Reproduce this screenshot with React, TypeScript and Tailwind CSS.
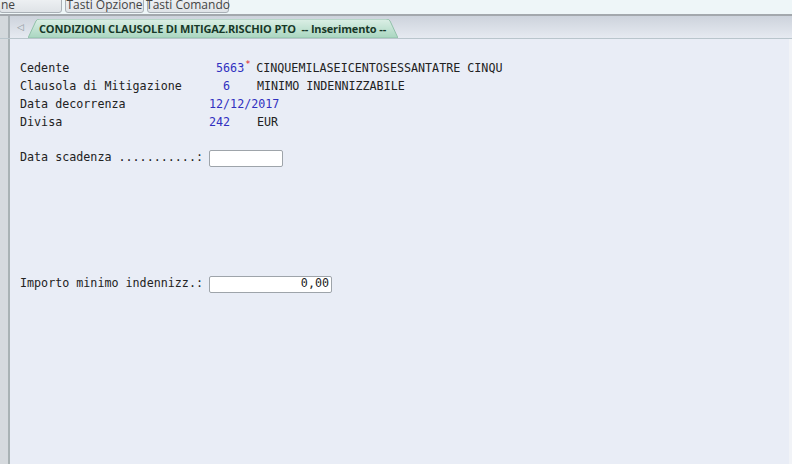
import React from "react";

const mono = "font-['DejaVu_Sans_Mono','Liberation_Mono',monospace] text-[11.7px]";

function Row({ label, children }: { label: string; children?: React.ReactNode }) {
  return (
    <div className="flex h-[18px] items-center">
      <div className="w-[189px] whitespace-pre text-[#222]">{label}</div>
      {children}
    </div>
  );
}

const btn =
  "h-[20px] mb-[1px] border border-[#a9b0b6] rounded-[3px] bg-gradient-to-b from-[#f4f6f8] to-[#dfe3e7] flex items-end justify-center leading-[14px] whitespace-nowrap shrink-0";

export default function App() {
  return (
    <div className="w-[792px] h-[464px] overflow-hidden flex flex-col bg-[#e9edf6]">
      {/* toolbar strip, cut at the top */}
      <div className="h-[14px] bg-[#eef6f8] flex items-end gap-[3px] overflow-hidden font-['Open_Sans',sans-serif] text-[12px] text-[#444]">
        <div className={`${btn} w-[63px] -ml-[1px] !justify-start pl-[1px]`}>ne</div>
        <div className={`${btn} w-[79px]`}>Tasti Opzione</div>
        <div className={`${btn} w-[82px]`}>Tasti Comando</div>
      </div>

      {/* tab bar */}
      <div className="h-[25px] flex border-t-2 border-[#a3a8ad] bg-gradient-to-b from-[#cdd3dc] to-[#e6eaf1] border-b border-b-[#b9c5cc]">
        <div className="w-[12px] flex">
          <div className="w-[8px] bg-[#d3d8dc]" />
          <div className="w-[2px] bg-[#aab2b6]" />
        </div>
        <div className="w-[16px] flex items-center justify-center text-[9px] text-[#8a8f94]">◁</div>
        <div className="relative mt-[3px] flex items-center">
          <svg className="absolute inset-0 h-full w-full" viewBox="0 0 370 20" preserveAspectRatio="none">
            <defs>
              <linearGradient id="tabg" x1="0" y1="0" x2="0" y2="1">
                <stop offset="0" stopColor="#dcefe6" />
                <stop offset="1" stopColor="#a9d6c0" />
              </linearGradient>
            </defs>
            <path d="M0 20 L8 2 Q9 0 12 0 L358 0 Q361 0 362 2 L370 20 Z" fill="url(#tabg)" stroke="#8fbfa8" strokeWidth="1" />
          </svg>
          <div className="relative w-[370px] pl-[11px] font-['Open_Sans',sans-serif] font-bold text-[11px] text-[#173828] whitespace-pre leading-[20px] tracking-[-0.15px]">
            CONDIZIONI CLAUSOLE DI MITIGAZ.RISCHIO PTO  -- Inserimento --
          </div>
        </div>
      </div>

      {/* body */}
      <div className="flex-1 flex">
        <div className="w-[12px] flex">
          <div className="w-[8px] bg-[#d6dade]" />
          <div className="w-[2px] bg-[#a9b2b4]" />
        </div>
        <div className={`flex-1 pl-[8px] pt-[21px] ${mono}`}>
          <Row label="Cedente">
            <span className="text-[#3030c0] whitespace-pre">{" 5663"}</span>
            <span className="text-[#e02020] text-[9px] -mt-[8px] ml-[1px] w-[5px]">*</span>
            <span className="ml-[6px] text-[#222] whitespace-pre">CINQUEMILASEICENTOSESSANTATRE CINQU</span>
          </Row>
          <Row label="Clausola di Mitigazione">
            <span className="text-[#3030c0] whitespace-pre w-[48px]">{"  6"}</span>
            <span className="text-[#222]">MINIMO INDENNIZZABILE</span>
          </Row>
          <Row label="Data decorrenza">
            <span className="text-[#3030c0]">12/12/2017</span>
          </Row>
          <Row label="Divisa">
            <span className="text-[#3030c0] w-[48px]">242</span>
            <span className="text-[#222]">EUR</span>
          </Row>

          <div className="mt-[17px]">
            <Row label="Data scadenza ...........:">
              <div className="w-[74px] h-[17px] bg-white border border-[#9ea4aa] rounded-[2px]" />
            </Row>
          </div>

          <div className="mt-[108px]">
            <Row label="Importo minimo indennizz.:">
              <div className="w-[123px] h-[17px] bg-white border border-[#9ea4aa] rounded-[2px] flex items-center justify-end pr-[2px] text-[#222]">0,00</div>
            </Row>
          </div>
        </div>
        <div className="w-[3px] bg-[#f1f3f7]" />
      </div>
    </div>
  );
}
